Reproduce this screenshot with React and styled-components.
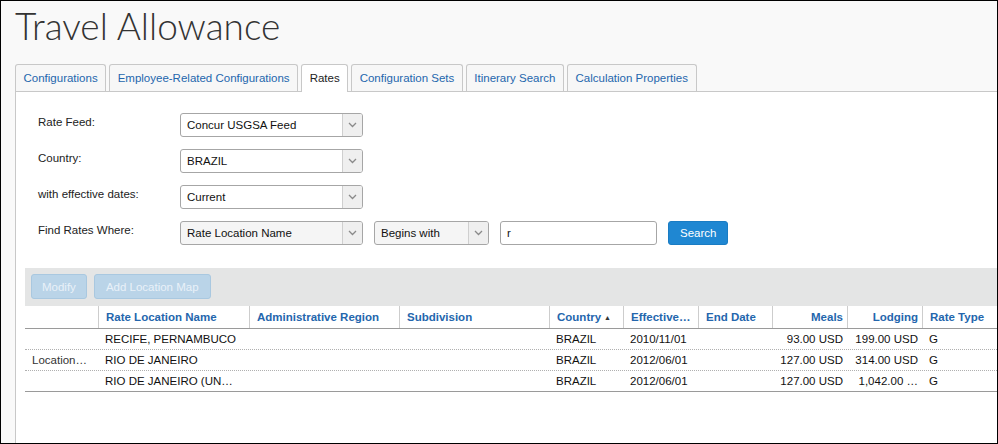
import React from 'react';
import styled, { createGlobalStyle } from 'styled-components';

const GlobalStyle = createGlobalStyle`
  html, body {
    margin: 0;
    padding: 0;
  }
  body {
    font-family: "Liberation Sans", Arial, sans-serif;
    font-size: 11.5px;
    color: #000;
  }
  * {
    box-sizing: border-box;
  }
`;

const Frame = styled.div`
  width: 998px;
  height: 444px;
  border: 1px solid #000;
  background: #f9f9f9;
  display: flex;
  flex-direction: column;
  overflow: hidden;
`;

const Title = styled.h1`
  margin: 0;
  height: 63px;
  padding: 2px 0 0 14px;
  font-family: Lato, "Open Sans", sans-serif;
  font-weight: 300;
  font-size: 37px;
  line-height: 45px;
  color: #333;
`;

const TabBar = styled.div`
  display: flex;
  align-items: flex-end;
  gap: 3px;
  height: 27px;
  padding-left: 14px;
`;

const Tab = styled.div`
  display: flex;
  align-items: center;
  height: ${p => (p.$active ? '28px' : '27px')};
  margin-bottom: ${p => (p.$active ? '-1px' : '0')};
  padding: 0 7.5px 1px;
  border: 1px solid #c8c8c8;
  border-bottom: 0;
  border-radius: 3px 3px 0 0;
  background: ${p => (p.$active ? '#fff' : '#f7f7f7')};
  color: ${p => (p.$active ? '#222' : '#2466ad')};
  white-space: nowrap;
  position: relative;
  z-index: 1;
`;

const Panel = styled.div`
  flex: 1;
  margin-left: 14px;
  background: #fff;
  border-top: 1px solid #c8c8c8;
  border-left: 1px solid #c8c8c8;
`;

const Form = styled.div`
  display: grid;
  grid-template-columns: 142px auto;
  row-gap: 12px;
  padding: 21px 0 0 22px;
`;

const Label = styled.div`
  line-height: 18px;
  color: #222;
`;

const Controls = styled.div`
  display: flex;
  gap: 11px;
`;

const SelectBox = styled.div`
  display: flex;
  width: ${p => p.$width}px;
  height: 24px;
  border: 1px solid #a6a6a6;
  border-radius: 3px;
  background: ${p => (p.$muted ? '#f5f5f5' : '#fff')};
  overflow: hidden;
`;

const SelectValue = styled.div`
  flex: 1;
  padding-left: 6px;
  line-height: 22px;
  color: #111;
  white-space: nowrap;
`;

const Arrow = styled.div`
  width: 20px;
  display: flex;
  align-items: center;
  justify-content: center;
  background: #efefef;
  border-left: 1px solid #cfcfcf;
`;

const TextInput = styled.div`
  width: 157px;
  height: 24px;
  border: 1px solid #a6a6a6;
  border-radius: 3px;
  padding-left: 6px;
  line-height: 22px;
  color: #111;
`;

const PrimaryButton = styled.button`
  height: 24px;
  padding: 0 11px;
  border: 1px solid #1a7cc3;
  border-radius: 3px;
  background: #1f87d2;
  color: #fff;
  font: inherit;
`;

const Grid = styled.div`
  margin: 23px 0 0 9px;
`;

const Toolbar = styled.div`
  display: flex;
  gap: 7px;
  height: 38px;
  padding: 6px;
  background: #e4e5e5;
`;

const ToolButton = styled.button`
  height: 25px;
  padding: 0 ${p => p.$pad}px;
  border: 1px solid #a9c8e0;
  border-radius: 3px;
  background: #bad4e8;
  color: #e9f1f8;
  font: inherit;
`;

const Row = styled.div`
  display: grid;
  grid-template-columns: 73px 151px 150px 150px 74px 75px 74px 75px 75px 75px;
  height: ${p => (p.$head ? '23px' : '21px')};
  border-bottom: 1px ${p => (p.$solid ? 'solid #9a9a9a' : 'dotted #b0b0b0')};
`;

const HeadCell = styled.div`
  padding: 0 ${p => (p.$right ? '4px' : '7px')};
  line-height: 22px;
  border-left: ${p => (p.$first ? '0' : '1px solid #cdcdcd')};
  font-weight: bold;
  color: #2466ad;
  text-align: ${p => (p.$right ? 'right' : 'left')};
  white-space: nowrap;
  overflow: hidden;
`;

const Cell = styled.div`
  padding: 0 ${p => (p.$right ? '4px 0 7px' : '7px')};
  line-height: 20px;
  color: ${p => (p.$muted ? '#333' : '#111')};
  text-align: ${p => (p.$right ? 'right' : 'left')};
  white-space: nowrap;
  overflow: hidden;
`;

const SortMark = styled.span`
  font-size: 7px;
  margin-left: 3px;
  vertical-align: 1px;
  color: #333;
`;

function Chevron() {
  return (
    <svg width="9" height="6" viewBox="0 0 9 6">
      <path d="M1 1l3.5 3.5L8 1" fill="none" stroke="#8a8a8a" strokeWidth="1.3" />
    </svg>
  );
}

function Select({ value, width, muted }) {
  return (
    <SelectBox $width={width} $muted={muted}>
      <SelectValue>{value}</SelectValue>
      <Arrow>
        <Chevron />
      </Arrow>
    </SelectBox>
  );
}

const tabs = [
  'Configurations',
  'Employee-Related Configurations',
  'Rates',
  'Configuration Sets',
  'Itinerary Search',
  'Calculation Properties',
];

const columns = [
  { title: '' },
  { title: 'Rate Location Name' },
  { title: 'Administrative Region' },
  { title: 'Subdivision' },
  { title: 'Country', sorted: true },
  { title: 'Effective…' },
  { title: 'End Date' },
  { title: 'Meals', right: true },
  { title: 'Lodging', right: true },
  { title: 'Rate Type' },
];

const rates = [
  ['', 'RECIFE, PERNAMBUCO', '', '', 'BRAZIL', '2010/11/01', '', '93.00 USD', '199.00 USD', 'G'],
  ['Location…', 'RIO DE JANEIRO', '', '', 'BRAZIL', '2012/06/01', '', '127.00 USD', '314.00 USD', 'G'],
  ['', 'RIO DE JANEIRO (UN…', '', '', 'BRAZIL', '2012/06/01', '', '127.00 USD', '1,042.00 …', 'G'],
];

export default function App() {
  return (
    <>
      <GlobalStyle />
      <Frame>
        <Title>Travel Allowance</Title>
        <TabBar>
          {tabs.map(t => (
            <Tab key={t} $active={t === 'Rates'}>{t}</Tab>
          ))}
        </TabBar>
        <Panel>
          <Form>
            <Label>Rate Feed:</Label>
            <Select value="Concur USGSA Feed" width={183} />
            <Label>Country:</Label>
            <Select value="BRAZIL" width={183} />
            <Label>with effective dates:</Label>
            <Select value="Current" width={183} />
            <Label>Find Rates Where:</Label>
            <Controls>
              <Select value="Rate Location Name" width={183} muted />
              <Select value="Begins with" width={115} muted />
              <TextInput>r</TextInput>
              <PrimaryButton>Search</PrimaryButton>
            </Controls>
          </Form>

          <Grid>
            <Toolbar>
              <ToolButton $pad={10}>Modify</ToolButton>
              <ToolButton $pad={11}>Add Location Map</ToolButton>
            </Toolbar>
            <Row $head $solid>
              {columns.map((c, i) => (
                <HeadCell key={i} $first={i === 0} $right={c.right}>
                  {c.title}
                  {c.sorted && <SortMark>▲</SortMark>}
                </HeadCell>
              ))}
            </Row>
            {rates.map((r, ri) => (
              <Row key={ri} $solid={ri === rates.length - 1}>
                {r.map((v, i) => (
                  <Cell key={i} $right={columns[i].right} $muted={i === 0}>{v}</Cell>
                ))}
              </Row>
            ))}
          </Grid>
        </Panel>
      </Frame>
    </>
  );
}
